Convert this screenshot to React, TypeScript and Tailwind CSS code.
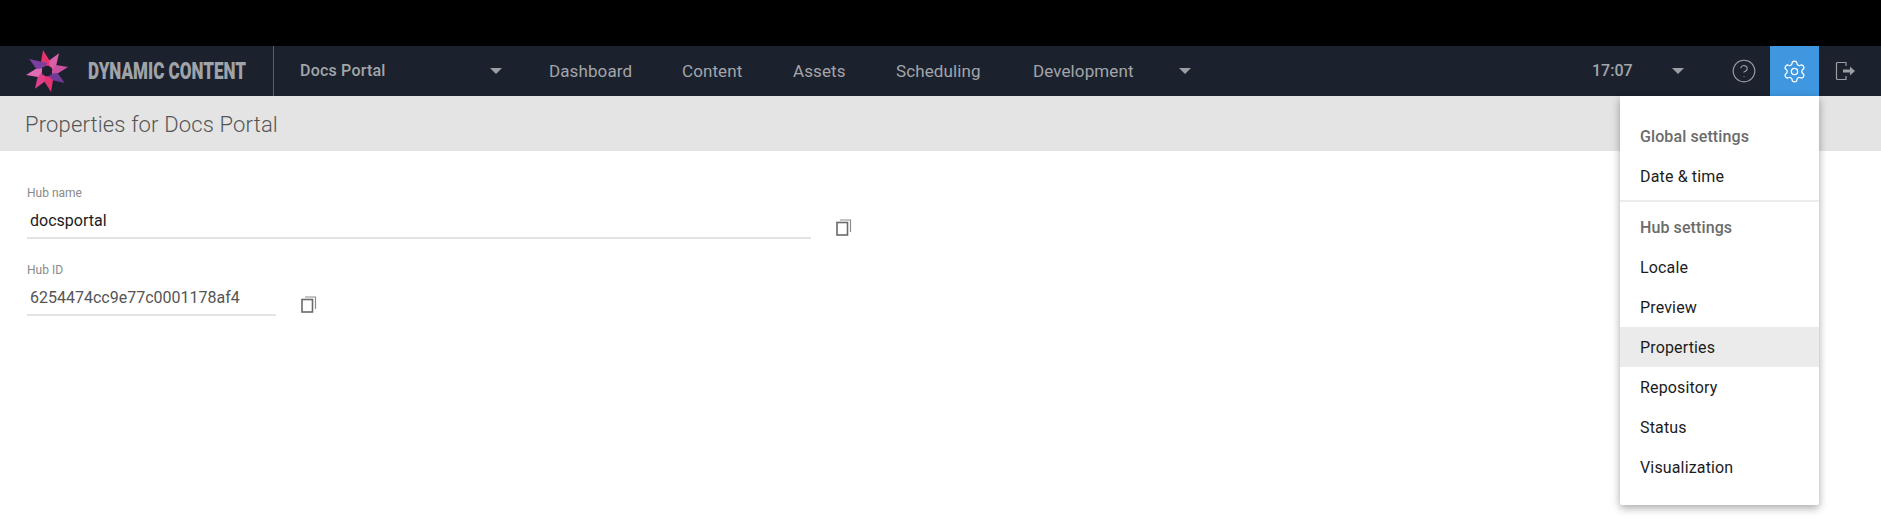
import React from "react";
import { CircleHelp, Settings } from "lucide-react";

const navLinks = [
    { label: "Dashboard", width: "w-[133px]" },
    { label: "Content", width: "w-[111px]" },
    { label: "Assets", width: "w-[103px]" },
    { label: "Scheduling", width: "w-[137px]" },
    { label: "Development", width: "w-[146px]" },
];

const blades = [
    { angle: 0, color: "#e5336f" },
    { angle: 45, color: "#d95fa8" },
    { angle: 90, color: "#c9529f" },
    { angle: 135, color: "#6f3a98" },
    { angle: 180, color: "#e5336f" },
    { angle: 225, color: "#e0408a" },
    { angle: 270, color: "#e06cb4" },
    { angle: 315, color: "#7b3fa0" },
];

function Logo() {
    return (
        <svg width="42" height="42" viewBox="0 0 42 42" className="shrink-0">
            {blades.map((b) => (
                <polygon
                    key={b.angle}
                    points="17,0 27,16 20,16 15,12"
                    fill={b.color}
                    transform={`rotate(${b.angle} 21 21)`}
                />
            ))}
            <polygon points="21,15 22.5,18.5 26,17 24.5,21 26,25 22.5,23.5 21,27 19.5,23.5 16,25 17.5,21 16,17 19.5,18.5" fill="#1b222e" />
        </svg>
    );
}

function Caret({ className }: { className: string }) {
    return <span className={`block w-0 h-0 border-x-[6px] border-x-transparent border-t-[6px] border-t-[#9b9ea3] ${className}`} />;
}

function LogoutIcon() {
    return (
        <svg width="22" height="22" viewBox="0 0 22 22" fill="none" stroke="#9b9ea3" strokeWidth="1.2">
            <path d="M11 6V2.5H2.5a1 1 0 0 0-1 1v15a1 1 0 0 0 1 1H11V16" />
            <path d="M8 9.5h7V6.5l5 4.5-5 4.5v-3H8z" fill="#9b9ea3" stroke="none" />
        </svg>
    );
}

function CopyIcon({ className }: { className: string }) {
    return (
        <svg width="16" height="18" viewBox="0 0 16 18" fill="none" className={className}>
            <rect x="1" y="4.5" width="10.5" height="12.5" stroke="#6a6a6a" strokeWidth="1.6" />
            <path d="M4 2H14.5V14" stroke="#8c8c8c" strokeWidth="1.2" />
        </svg>
    );
}

function Field(props: { label: string; value: string; width: string; dark?: boolean }) {
    return (
        <div className="flex items-end">
            <div className={props.width}>
                <div className="text-[12px] leading-[14px] text-[#8a8a8a]">{props.label}</div>
                <div className={`mt-[9px] h-[30px] pl-[3px] border-b-2 border-[#e3e3e3] text-[16px] leading-[24px] ${props.dark ? "text-[#1c1c1c]" : "text-[#555555]"}`}>
                    {props.value}
                </div>
            </div>
            <CopyIcon className="ml-[25px] mb-[3px]" />
        </div>
    );
}

function MenuHeading({ children }: { children: React.ReactNode }) {
    return <div className="h-10 pl-5 pt-[1px] flex items-center text-[16px] tracking-[0.1px] font-medium text-[#6b6b6b]">{children}</div>;
}

function MenuItem({ children, active }: { children: React.ReactNode; active?: boolean }) {
    return <div className={`h-10 pl-5 pt-[1px] flex items-center text-[16px] tracking-[0.15px] text-[#1c1c1c] ${active ? "bg-[#ebebeb]" : ""}`}>{children}</div>;
}

function App() {
    return (
        <div className="relative h-[529px] w-[1881px] overflow-hidden bg-white font-['Roboto',sans-serif]">
            <div className="h-[46px] bg-black" />

            <nav className="h-[50px] flex items-center bg-[#1b222e] text-[#a3a5a9]">
                <div className="w-[274px] h-full flex items-center pl-[26px] border-r border-[#5a606a]">
                    <Logo />
                    <span className="ml-[20px] text-[24px] font-black text-[#a0a3a8] whitespace-nowrap origin-left scale-x-[0.71] w-[158px]">DYNAMIC CONTENT</span>
                </div>
                <div className="w-[275px] flex items-center pl-[26px] text-[16px] tracking-[0.2px] font-medium">
                    <span className="w-[190px]">Docs Portal</span>
                    <Caret className="" />
                </div>
                {navLinks.map((link) => (
                    <div key={link.label} className={`${link.width} pt-[2px] text-[17px] tracking-[0.1px]`}>{link.label}</div>
                ))}
                <Caret className="" />
                <div className="ml-auto flex items-center h-full">
                    <span className="text-[16px] font-medium w-[80px]">17:07</span>
                    <Caret className="" />
                    <CircleHelp size={26} strokeWidth={1} className="ml-[47px] text-[#9b9ea3]" />
                    <div className="ml-[13px] w-[49px] h-full bg-[#3f97e0] flex items-center justify-center">
                        <Settings size={25} strokeWidth={1.2} className="text-white" />
                    </div>
                    <div className="w-[62px] pl-[16px]">
                        <LogoutIcon />
                    </div>
                </div>
            </nav>

            <div className="h-[55px] flex items-center pl-[25px] pt-[1px] bg-[#e4e4e4] text-[22px] tracking-[0.15px] font-light text-[#555555]">
                Properties for Docs Portal
            </div>

            <div className="pt-[35px] pl-[27px] flex flex-col gap-[24px]">
                <Field label="Hub name" value="docsportal" width="w-[784px]" dark />
                <Field label="Hub ID" value="6254474cc9e77c0001178af4" width="w-[249px]" />
            </div>

            <div className="absolute left-[1620px] top-[96px] w-[199px] h-[409px] pt-[20px] rounded-b-[2px] bg-white shadow-[0_3px_8px_rgba(0,0,0,0.35)]">
                <MenuHeading>Global settings</MenuHeading>
                <MenuItem>Date &amp; time</MenuItem>
                <div className="h-[2px] mt-[4px] mb-[5px] bg-[#ececec]" />
                <MenuHeading>Hub settings</MenuHeading>
                <MenuItem>Locale</MenuItem>
                <MenuItem>Preview</MenuItem>
                <MenuItem active>Properties</MenuItem>
                <MenuItem>Repository</MenuItem>
                <MenuItem>Status</MenuItem>
                <MenuItem>Visualization</MenuItem>
            </div>
        </div>
    );
}

export default App;
